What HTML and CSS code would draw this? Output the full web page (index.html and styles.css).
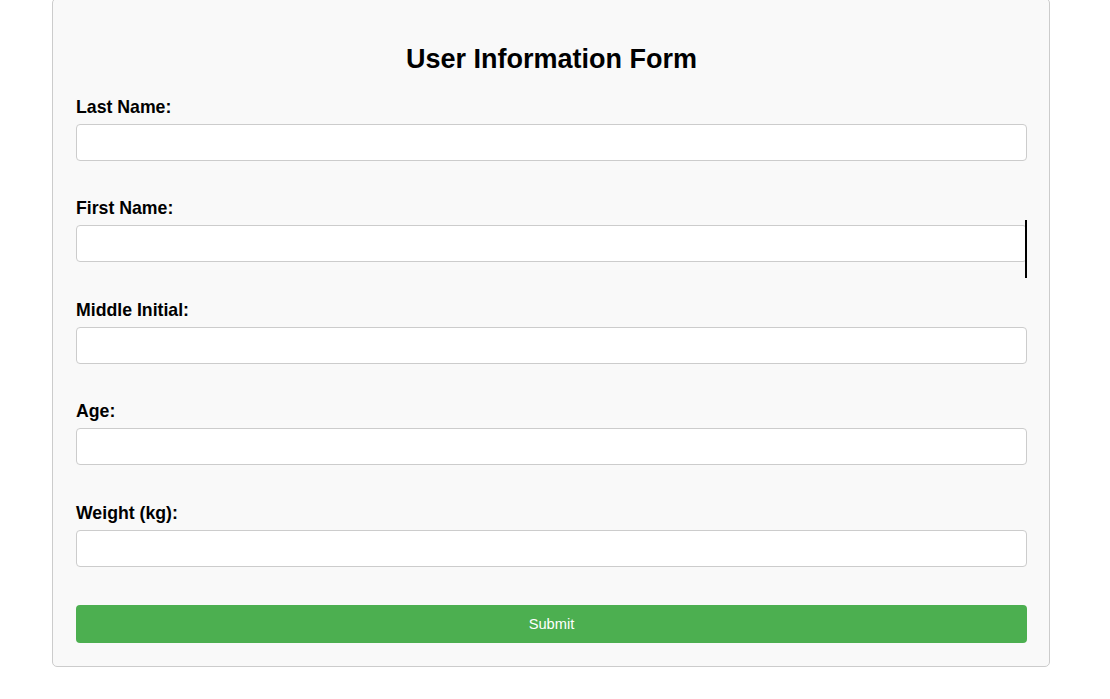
FILE: index.html
```html
<!DOCTYPE html>
<html lang="en">
<head>
<meta charset="utf-8">
<title>User Information Form</title>
<link rel="stylesheet" href="styles.css">
</head>
<body>
<div class="container">
  <h2 class="title">User Information Form</h2>
  <form class="form">
    <div class="field">
      <label class="label" for="lastName">Last Name:</label>
      <input class="input" type="text" id="lastName">
    </div>
    <div class="field">
      <label class="label" for="firstName">First Name:</label>
      <input class="input" type="text" id="firstName">
    </div>
    <div class="field">
      <label class="label" for="middleInitial">Middle Initial:</label>
      <input class="input" type="text" id="middleInitial">
    </div>
    <div class="field">
      <label class="label" for="age">Age:</label>
      <input class="input" type="text" id="age">
    </div>
    <div class="field">
      <label class="label" for="weight">Weight (kg):</label>
      <input class="input" type="text" id="weight">
    </div>
    <button class="submit" type="button">Submit</button>
  </form>
</div>
<div class="cursor"></div>
</body>
</html>
```

FILE: styles.css
```css
html, body {
  margin: 0;
  padding: 0;
  background: #ffffff;
}

body {
  font-family: "Liberation Sans", Arial, sans-serif;
  color: #000;
}

.container {
  box-sizing: border-box;
  width: 998px;
  margin: -2.4px 0 0 52px;
  padding: 45px 22px 23px 23px;
  background: #f9f9f9;
  border: 1px solid #cccccc;
  border-radius: 5px;
}

.title {
  margin: 0 0 23px 0;
  font-size: 27px;
  line-height: 30px;
  font-weight: bold;
  text-align: center;
}

.form {
  display: flex;
  flex-direction: column;
}

.field {
  display: flex;
  flex-direction: column;
  gap: 7px;
  margin-bottom: 37.5px;
}

.label {
  font-size: 17.7px;
  line-height: 20px;
  font-weight: bold;
}

.input {
  box-sizing: border-box;
  width: 100%;
  height: 37px;
  margin: 0;
  padding: 0 9px;
  background: #ffffff;
  border: 1px solid #cccccc;
  border-radius: 4px;
  font-family: inherit;
  font-size: 17.6px;
}

.submit {
  box-sizing: border-box;
  height: 38.6px;
  width: 100%;
  display: flex;
  align-items: center;
  justify-content: center;
  margin: 0.7px 0 0 0;
  padding: 0;
  border: none;
  border-radius: 4px;
  background: #4caf50;
  color: #ffffff;
  font-family: inherit;
  font-size: 14.67px;
}

.cursor {
  position: absolute;
  left: 1025px;
  top: 220px;
  width: 2px;
  height: 58px;
  background: #000;
}
```
